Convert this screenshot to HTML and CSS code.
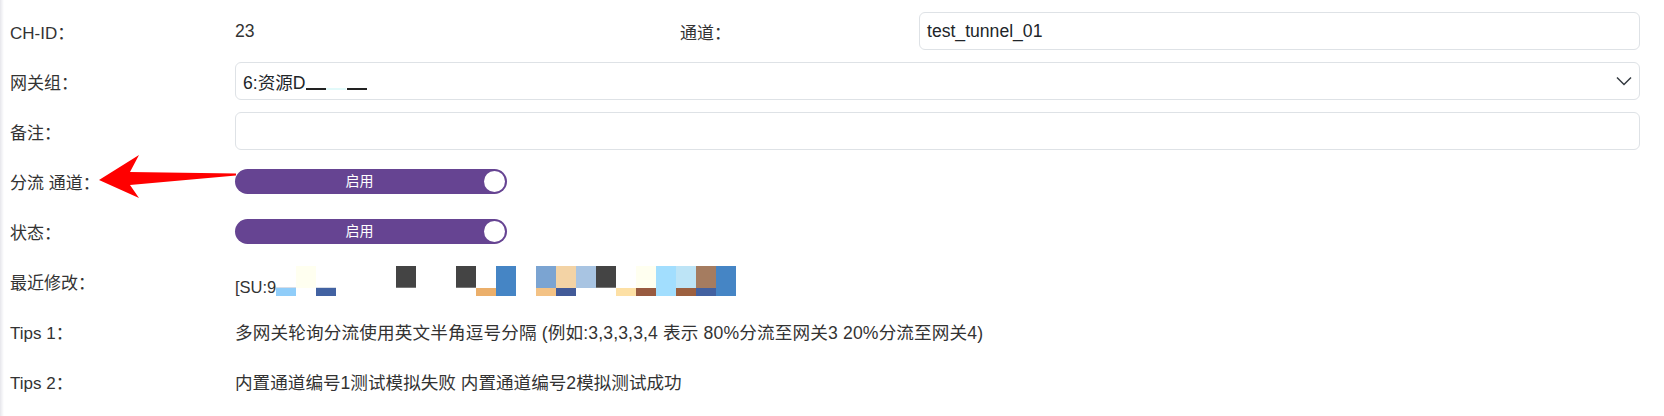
FILE: index.html
```html
<!DOCTYPE html>
<html lang="zh-CN">
<head>
<meta charset="utf-8">
<title>通道编辑</title>
<link rel="stylesheet" href="styles.css">
</head>
<body>
<div class="page">
  <div class="form">
    <div class="label">CH-ID：</div>
    <div class="value">23</div>
    <div class="label">通道：</div>
    <div class="input">test_tunnel_01</div>

    <div class="label">网关组：</div>
    <div class="input select span3">
      <span class="sel-text">6:资源D<span class="bar bar-dark"></span><span class="bar bar-cyan"></span><span class="bar bar-dark bar-gap"></span></span>
      <svg class="chevron" width="16" height="10" viewBox="0 0 16 10"><path d="M1 1.5 L8 8.5 L15 1.5" fill="none" stroke="#343a40" stroke-width="1.5"/></svg>
    </div>

    <div class="label">备注：</div>
    <div class="input span3"></div>

    <div class="label">分流 通道：</div>
    <div class="value span3">
      <div class="toggle"><span class="toggle-text">启用</span><span class="knob"></span></div>
    </div>

    <div class="label">状态：</div>
    <div class="value span3">
      <div class="toggle"><span class="toggle-text">启用</span><span class="knob"></span></div>
    </div>

    <div class="label">最近修改：</div>
    <div class="value span3">
      <span class="modified">[SU:9<svg class="mosaic" width="460" height="30" viewBox="0 0 460 30">
        <rect x="0" y="22" width="20" height="8" fill="#90cdf9"/>
        <rect x="0" y="21" width="20" height="1" fill="#d8dde6"/>
        <rect x="20" y="0" width="20" height="22" fill="#fffff0"/>
        <rect x="40" y="21" width="20" height="1" fill="#d8dde6"/>
        <rect x="40" y="22" width="20" height="8" fill="#4262a2"/>
        <rect x="120" y="0" width="20" height="22" fill="#444444"/>
        <rect x="120" y="21" width="20" height="1" fill="#777"/>
        <rect x="180" y="0" width="20" height="22" fill="#444444"/>
        <rect x="180" y="21" width="20" height="1" fill="#777"/>
        <rect x="200" y="22" width="20" height="8" fill="#ebaf6b"/>
        <rect x="220" y="0" width="20" height="30" fill="#4585c5"/>
        <rect x="260" y="0" width="20" height="22" fill="#7ba4d2"/>
        <rect x="260" y="22" width="20" height="8" fill="#f3c285"/>
        <rect x="280" y="0" width="20" height="22" fill="#f3d3a5"/>
        <rect x="280" y="22" width="20" height="8" fill="#425a98"/>
        <rect x="300" y="0" width="20" height="22" fill="#a8c4e2"/>
        <rect x="320" y="0" width="20" height="22" fill="#444444"/>
        <rect x="320" y="21" width="20" height="1" fill="#777"/>
        <rect x="340" y="22" width="20" height="8" fill="#fde0a5"/>
        <rect x="360" y="0" width="20" height="22" fill="#fffff0"/>
        <rect x="360" y="22" width="20" height="8" fill="#985a40"/>
        <rect x="380" y="0" width="20" height="30" fill="#a2defe"/>
        <rect x="400" y="0" width="20" height="22" fill="#bde4f6"/>
        <rect x="400" y="22" width="20" height="8" fill="#9c6040"/>
        <rect x="420" y="0" width="20" height="22" fill="#a57c60"/>
        <rect x="420" y="22" width="20" height="8" fill="#4361a0"/>
        <rect x="440" y="0" width="20" height="30" fill="#4585c5"/>
      </svg></span>
    </div>

    <div class="label">Tips 1：</div>
    <div class="value span3 tips">多网关轮询分流使用英文半角逗号分隔 (例如:3,3,3,3,4 表示 80%分流至网关3 20%分流至网关4)</div>

    <div class="label">Tips 2：</div>
    <div class="value span3">内置通道编号1测试模拟失败 内置通道编号2模拟测试成功</div>
  </div>

  <svg class="arrow" width="260" height="220" viewBox="0 0 260 220">
    <polygon points="99,180 139,155 130,172 236,173.5 236,175.5 130,185 139,198" fill="#ff0000"/>
  </svg>
</div>
</body>
</html>
```

FILE: styles.css
```css
html, body {
  margin: 0;
  padding: 0;
  background: #ffffff;
}

body {
  font-family: "Liberation Sans", "Noto Sans CJK SC", sans-serif;
  font-size: 17.6px;
  color: #333333;
}

.page {
  position: relative;
  box-sizing: border-box;
  min-height: 416px;
  padding: 12px 24px 0 10px;
  background: linear-gradient(to right, #e6e6eb 0, #f3f3f6 2px, #ffffff 4px);
}

.form {
  display: grid;
  grid-template-columns: 225px 445px 239px 1fr;
  grid-auto-rows: 38px;
  row-gap: 12px;
  align-items: center;
}

.span3 {
  grid-column: 2 / 5;
}

.label,
.value {
  display: flex;
  align-items: center;
  white-space: nowrap;
}

.label {
  font-size: 17px;
}

.tips {
  letter-spacing: 0.15px;
}

.input {
  box-sizing: border-box;
  height: 38px;
  border: 1px solid #dee2e6;
  border-radius: 6px;
  padding: 0 7px;
  display: flex;
  align-items: center;
  color: #212529;
}

.select {
  justify-content: space-between;
  padding-right: 7px;
}

.bar {
  display: inline-block;
  width: 20px;
  height: 2px;
  vertical-align: baseline;
  margin-bottom: -1px;
}

.bar-dark { background: #222222; }
.bar-cyan { background: #e2fafa; }
.bar-gap { margin-left: 1px; }

.chevron {
  display: block;
}

.toggle {
  width: 272px;
  height: 25px;
  border-radius: 13px;
  background: #664492;
  display: flex;
  align-items: center;
}

.toggle-text {
  flex: 1;
  text-align: center;
  color: #ffffff;
  font-size: 14px;
  line-height: 1;
}

.knob {
  width: 21px;
  height: 21px;
  border-radius: 50%;
  background: #ffffff;
  margin-right: 2px;
}

.modified {
  display: inline-block;
  font-size: 16.5px;
}

.mosaic {
  vertical-align: -3px;
}

.arrow {
  position: absolute;
  left: 0;
  top: 0;
  pointer-events: none;
}
```
